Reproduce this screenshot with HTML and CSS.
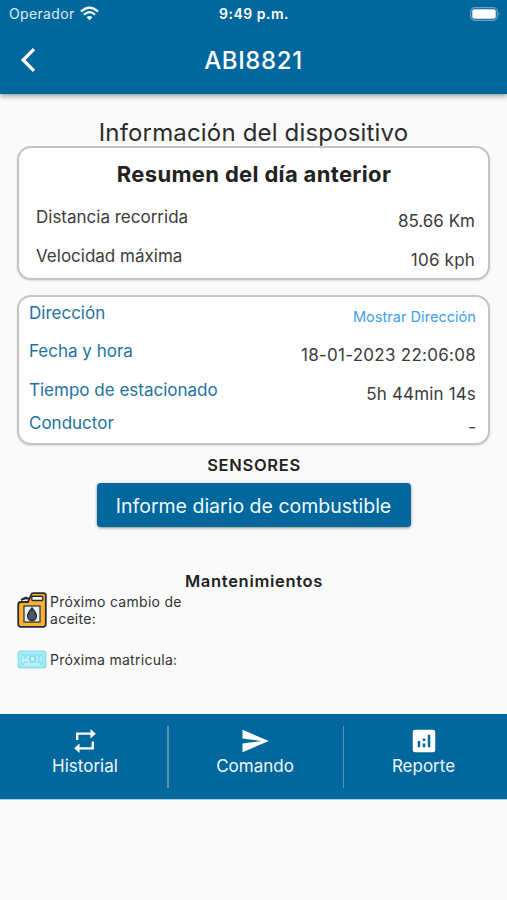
FILE: index.html
```html
<!DOCTYPE html>
<html lang="es">
<head>
<meta charset="utf-8">
<meta name="viewport" content="width=device-width, initial-scale=1">
<title>ABI8821</title>
<link rel="stylesheet" href="styles.css">
</head>
<body>
<header class="top">
  <div class="status">
    <div class="carrier"><span>Operador</span>
      <svg width="19" height="15" viewBox="0 0 19 15" fill="none" stroke="#fff" stroke-width="2.3"><path d="M1 5.500Q9.500-2.300 18 5.500M4 8.600Q9.500 3.600 15 8.600"/><path d="M6.600 11.300Q9.500 8.600 12.400 11.300L9.500 14.300Z" fill="#fff" stroke="none"/></svg>
    </div>
    <span class="clock">9:49 p.m.</span>
    <svg class="battery" width="31" height="14" viewBox="0 0 31 14"><rect x=".7" y=".7" width="26.600" height="12.600" rx="4" fill="none" stroke="#6ba5c6" stroke-width="1.200"/><rect x="2.300" y="2.300" width="23.400" height="9.400" rx="2" fill="#fff"/><path d="M28.500 4.800q2 2.200 0 4.400z" fill="#6ba5c6"/></svg>
  </div>
  <div class="appbar">
    <svg class="back" width="16" height="26" viewBox="0 0 16 26" fill="none" stroke="#fff" stroke-width="3.300"><path d="M14 2.200 3.200 13 14 23.800"/></svg>
    <h1>ABI8821</h1>
    <span></span>
  </div>
</header>
<main>
  <h2>Información del dispositivo</h2>
  <section class="card summary">
    <h3>Resumen del día anterior</h3>
    <div class="row r1"><span>Distancia recorrida</span><span class="value">85.66 Km</span></div>
    <div class="row r2"><span>Velocidad máxima</span><span class="value kph">106 kph</span></div>
  </section>
  <section class="card details">
    <div class="row d1"><span>Dirección</span><a class="value">Mostrar Dirección</a></div>
    <div class="row d2"><span>Fecha y hora</span><span class="value date">18-01-2023 22:06:08</span></div>
    <div class="row d3"><span>Tiempo de estacionado</span><span class="value parked">5h 44min 14s</span></div>
    <div class="row d4"><span>Conductor</span><span class="value">-</span></div>
  </section>
  <h4 class="sensors">SENSORES</h4>
  <button class="fuel">Informe diario de combustible</button>
  <h4 class="maint">Mantenimientos</h4>
  <div class="item oil">
    <svg width="30" height="36" viewBox="0 0 30 36"><path d="M4 8 9 5.500 12 7" fill="#333" stroke="#292b32" stroke-width="2"/><path d="M11 10 14 3Q14.600 1.200 16.500 1.200H26.500Q28.800 1.200 28.800 3.500V32Q28.800 34.800 26 34.800H4Q1.200 34.800 1.200 32V13Q1.200 10.200 4 10Z" fill="#f9b42d" stroke="#292b32" stroke-width="1.800"/><rect x="14.800" y="4.200" width="11" height="4.300" rx="1" fill="#fafafa" stroke="#292b32" stroke-width="1.400"/><rect x="7" y="14" width="16" height="16" fill="#e2f1fa" stroke="#292b32" stroke-width="1.200"/><path d="M15 16Q19.500 21.500 19.500 24A4.500 4.500 0 0 1 10.500 24Q10.500 21.500 15 16Z" fill="#475866" stroke="#292b32" stroke-width="1.300"/></svg>
    <p>Próximo cambio de<br>aceite:</p>
  </div>
  <div class="item plate">
    <svg width="30" height="19" viewBox="0 0 30 19"><rect x=".5" y=".5" width="29" height="18" rx="3" fill="#8fe0f0"/><rect x="3" y="3" width="24" height="13" rx="2" fill="#8fe2f2" stroke="#c6f3fa"/><path d="M6 6v6l3-3 2 3V6m9 0v6m4-6v6M7 14h16" fill="none" stroke="#c9f5fc" stroke-width="1.300"/><circle cx="15.500" cy="9" r="2.500" fill="#e6fcff" stroke="#67cfe3"/></svg>
    <p>Próxima matricula:</p>
  </div>
</main>
<nav>
  <a class="history"><svg width="24" height="28" viewBox="0 0 24 28"><path d="M4.200 13V6.700H18M19.800 14.500V21.300H6" fill="none" stroke="#fff" stroke-width="2.300"/><path d="M17.500 2 22.800 6.700 17.500 11.400zM6.500 16.600 1.200 21.300 6.500 26z" fill="#fff"/></svg><span>Historial</span></a>
  <i></i>
  <a class="command"><svg width="30" height="28" viewBox="0 0 24 24" fill="#fff"><path d="M2.010 21 23 12 2.010 3 2 10l15 2-15 2z"/></svg><span>Comando</span></a>
  <i></i>
  <a class="report"><svg width="30" height="30" viewBox="0 0 24 24" fill="#fff"><path fill-rule="evenodd" d="M19 3H5a2 2 0 0 0-2 2v14a2 2 0 0 0 2 2h14a2 2 0 0 0 2-2V5a2 2 0 0 0-2-2zM9 17H7v-5h2v5zm4 0h-2v-3h2v3zm0-5h-2v-2h2v2zm4 5h-2V7h2v10z"/></svg><span>Reporte</span></a>
</nav>
</body>
</html>
```
FILE: styles.css
```css
* { box-sizing: border-box; }
body { margin: 0; background: #fafafa; color: #222; font-family: Inter, sans-serif; width: 507px; min-height: 900px; }
h1, h2, h3, h4, p { margin: 0; white-space: nowrap; }
svg { display: block; flex: none; }

.top { height: 94px; background: #01679c; color: #fff; box-shadow: 0 2px 5px rgba(0,0,0,.4); }
.status { display: grid; grid-template-columns: 1fr auto 1fr; height: 27px; align-items: center; padding: 0 6px 0 9px; }
.carrier { display: flex; gap: 5px; align-items: center; font-size: 14px; letter-spacing: .35px; line-height: 27px; color: #d9edf6; }
.clock { font-size: 14px; font-weight: 600; letter-spacing: .5px; margin-left: -2px; }
.battery { justify-self: end; }
.appbar { display: grid; grid-template-columns: 36px 1fr 36px; align-items: center; height: 66px; padding: 0 20px; }
h1 { font-size: 24px; font-weight: 500; text-align: center; letter-spacing: .6px; }

main { display: flex; flex-direction: column; height: 620px; padding: 25px 17px 0 17px; }
h2 { font-size: 24px; font-weight: 400; line-height: 28px; text-align: center; letter-spacing: .17px; color: #2b2b2b; }
.card { width: 473px; border: 2px solid #c4c4c4; border-radius: 14px; background: #fff; box-shadow: 0 1px 2px rgba(0,0,0,.12); }
.summary { height: 134px; margin-top: -1px; padding: 14px 13px 0 17px; }
h3 { font-size: 22px; font-weight: 700; line-height: 24px; text-align: center; letter-spacing: .34px; margin-right: 3px; }
.row { display: flex; justify-content: space-between; align-items: flex-start; font-size: 17px; line-height: 20px; color: #3b3b3b; white-space: nowrap; }
.value { margin-top: 4px; }
.r1 { margin-top: 21px; }
.r2 { margin-top: 15px; }
.kph { letter-spacing: .2px; }
.details { height: 150px; margin-top: 15px; padding: 6px 12px 0 10px; }
.details .row > span:first-child { color: #23739f; }
.details a { font-size: 14.600px; color: #3c9fe8; }
.date { letter-spacing: .27px; }
.parked { letter-spacing: .16px; }
.d2 { margin-top: 14px; }
.d3 { margin-top: 15px; }
.d4 { margin-top: 9px; }
.d3, .d4 { position: relative; top: -.5px; }
h4 { font-size: 16.500px; font-weight: 600; line-height: 20px; text-align: center; letter-spacing: .7px; margin-left: 1px; }
.sensors { margin-top: 10px; }
.fuel { align-self: center; width: 314px; height: 44px; margin-top: 8px; padding: 1px 0 0; border: 0; border-radius: 4px; background: #01679c; color: #eefaff; font: 400 19.500px Inter, sans-serif; white-space: nowrap; box-shadow: 0 1px 3px rgba(0,0,0,.45); }
.maint { margin-top: 44px; }
.item { display: flex; align-items: center; gap: 3px; font-size: 14px; letter-spacing: .28px; line-height: 17px; color: #333; }
.oil { height: 38px; }
.plate { height: 20px; margin-top: 20px; }

nav { display: flex; height: 86px; padding-top: 12px; background: #01679c; border-bottom: 1px solid #a9cbdc; }
nav a { display: flex; flex-direction: column; align-items: center; color: #edf9ff; font-size: 17px; }
nav svg { height: 30px; }
nav span { line-height: 20px; }
nav i { width: 1.500px; height: 62px; background: #5b93ae; }
.history { width: 167px; padding-left: 3px; }
.command { width: 174px; padding-right: 1px; }
.report { flex: 1; padding-right: 4px; }
```
